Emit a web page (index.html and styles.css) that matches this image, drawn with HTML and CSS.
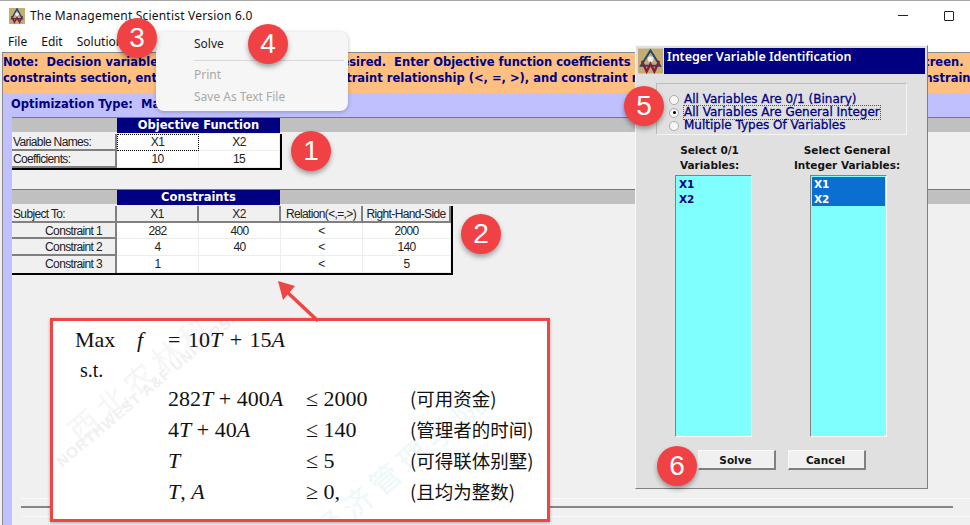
FILE: index.html
```html
<!DOCTYPE html>
<html lang="en">
<head>
  <meta charset="UTF-8" />
  <title>The Management Scientist Version 6.0</title>
  <link rel="stylesheet" href="styles.css">
</head>
<body>

<header class="titlebar">
  <svg class="app-icon" viewBox="0 0 18 18"><rect width="18" height="18" fill="#c4ad72"/><path d="M9 1 L15 12 L3 12 Z" fill="none" stroke="#1c4a78" stroke-width="1.6"/><circle cx="9" cy="7" r="2" fill="#eee"/><path d="M3 9 L6 16 L9 11 L12 16 L15 9" fill="none" stroke="#8c1c3c" stroke-width="1.8"/></svg>
  <span class="app-title">The Management Scientist Version 6.0</span>
  <span class="win-min"></span>
  <span class="win-max"></span>
</header>

<nav class="menubar">
  <span>File</span>
  <span>Edit</span>
  <span>Solution</span>
</nav>

<main class="client">
  <div class="note">
    <div>Note:&nbsp; Decision variable names can be changed as desired.&nbsp; Enter Objective function coefficients in the objectives section at the top of your screen.</div>
    <div>constraints section, enter the coefficients, then constraint relationship (&lt;, =, &gt;), and constraint right-hand-side values for each row of the constraints</div>
  </div>
  <div class="opt-type">Optimization Type:&nbsp; Maximize</div>

  <div class="sheet">
    <section class="block block-obj">
      <div class="band"><span class="band-title">Objective Function</span></div>
      <div class="grid grid-obj">
        <div class="cell label">Variable Names:</div>
        <div class="cell head focus">X1</div>
        <div class="cell head">X2</div>
        <div class="cell label">Coefficients:</div>
        <div class="cell">10</div>
        <div class="cell">15</div>
      </div>
    </section>

    <section class="block block-con">
      <div class="band"><span class="band-title">Constraints</span></div>
      <div class="grid grid-con">
        <div class="cell label">Subject To:</div>
        <div class="cell head">X1</div>
        <div class="cell head">X2</div>
        <div class="cell head">Relation(&lt;,=,&gt;)</div>
        <div class="cell head">Right-Hand-Side</div>

        <div class="cell label right">Constraint 1</div>
        <div class="cell">282</div>
        <div class="cell">400</div>
        <div class="cell">&lt;</div>
        <div class="cell">2000</div>

        <div class="cell label right">Constraint 2</div>
        <div class="cell">4</div>
        <div class="cell">40</div>
        <div class="cell">&lt;</div>
        <div class="cell">140</div>

        <div class="cell label right">Constraint 3</div>
        <div class="cell">1</div>
        <div class="cell"></div>
        <div class="cell">&lt;</div>
        <div class="cell">5</div>
      </div>
    </section>

    <div class="scroll-track"><div class="scroll-line"></div></div>
  </div>
</main>

<!-- popup from the Solution menu -->
<div class="popup">
  <div class="popup-item">Solve</div>
  <div class="popup-sep"></div>
  <div class="popup-item off">Print</div>
  <div class="popup-item off">Save As Text File</div>
</div>

<!-- pasted model formulation -->
<div class="model">
  <span class="mark mark-gray">西北农林科技大学</span>
  <span class="mark mark-en">NORTHWEST A&amp;F UNIVERSITY</span>
  <span class="mark mark-blue">经济管理学院</span>
  <div class="model-grid">
    <div>Max</div><div class="f"><i>f</i></div><div class="wide eq">= 10<i>T</i> + 15<i>A</i></div>
    <div class="st">s.t.</div><div></div><div class="wide"></div>
    <div></div><div></div><div>282<i>T</i> + 400<i>A</i></div><div>≤ 2000</div><div class="cn">(可用资金)</div>
    <div></div><div></div><div>4<i>T</i> + 40<i>A</i></div><div>≤ 140</div><div class="cn">(管理者的时间)</div>
    <div></div><div></div><div><i>T</i></div><div>≤ 5</div><div class="cn">(可得联体别墅)</div>
    <div></div><div></div><div><i>T</i>, <i>A</i></div><div>≥ 0,</div><div class="cn">(且均为整数)</div>
  </div>
</div>

<svg class="arrow" viewBox="0 0 50 50" width="50" height="50"><path d="M43 42 L10 11" stroke="#f04545" stroke-width="3.5" fill="none"/><path d="M3 2 L20 7 L8 21 Z" fill="#f04545"/></svg>

<!-- dialog -->
<div class="dialog">
  <div class="dlg-head">
    <svg class="dlg-icon" viewBox="0 0 26 26"><rect width="26" height="26" fill="#c4ad72"/><path d="M13 2 L23 18 L3 18 Z" fill="none" stroke="#1c4a78" stroke-width="2"/><circle cx="13" cy="11" r="3" fill="#eee"/><path d="M4 13 L9 24 L13 16 L17 24 L22 13" fill="none" stroke="#8c1c3c" stroke-width="2.4"/></svg>
    <div class="dlg-title">Integer Variable Identification</div>
  </div>
  <div class="radios">
    <div class="radio"><span class="dot"></span>All Variables Are 0/1 (Binary)</div>
    <div class="radio"><span class="dot on"></span><span class="dotted">All Variables Are General Integer</span></div>
    <div class="radio"><span class="dot"></span>Multiple Types Of Variables</div>
  </div>
  <div class="lists">
    <div class="list-col">
      <div class="list-title title-left">Select 0/1<br>Variables:</div>
      <div class="list">
        <div class="opt">X1</div>
        <div class="opt">X2</div>
      </div>
    </div>
    <div class="list-col">
      <div class="list-title title-right">Select General<br>Integer Variables:</div>
      <div class="list">
        <div class="opt sel">X1</div>
        <div class="opt sel">X2</div>
      </div>
    </div>
  </div>
  <div class="dlg-buttons">
    <button class="btn">Solve</button>
    <button class="btn">Cancel</button>
  </div>
</div>

<span class="badge b1">1</span>
<span class="badge b2">2</span>
<span class="badge b3">3</span>
<span class="badge b4">4</span>
<span class="badge b5">5</span>
<span class="badge b6">6</span>

</body>
</html>
```

FILE: styles.css
```css
html, body {
  margin: 0;
  height: 525px;
  overflow: hidden;
}
body {
  position: relative;
  width: 970px;
  background: #f0f0f0;
  font-family: 'Liberation Sans', sans-serif;
  color: #000;
}

/* window chrome */
.titlebar {
  height: 30px;
  box-sizing: border-box;
  padding-left: 9px;
  display: flex;
  align-items: center;
  background: #fff;
  border-top: 1px solid #a8a8a8;
}
.app-icon {
  width: 16px;
  height: 16px;
}
.app-title {
  margin-left: 5px;
  font-family: 'Noto Sans', sans-serif;
  font-size: 12px;
  letter-spacing: .2px;
  color: #111;
}
.win-min {
  margin-left: auto;
  width: 10px;
  height: 1px;
  background: #222;
}
.win-max {
  margin-left: 36px;
  margin-right: 16px;
  width: 8px;
  height: 8px;
  border: 1px solid #222;
  border-radius: 1px;
}
.menubar {
  height: 22px;
  padding-left: 8px;
  display: flex;
  gap: 14px;
  align-items: center;
  background: #fff;
  font-family: 'Noto Sans', sans-serif;
  font-size: 12px;
  color: #111;
}

/* client area */
.client {
  margin-left: 2px;
  border-left: 1px solid #8a8a8a;
  border-top: 1px solid #8a8a8a;
}
.note {
  height: 40px;
  box-sizing: border-box;
  padding-top: 1px;
  background: #ffbf80;
  font-family: 'DejaVu Sans', sans-serif;
  font-size: 11.5px;
  font-weight: bold;
  line-height: 16px;
  color: #000080;
  white-space: nowrap;
  overflow: hidden;
}
.opt-type {
  height: 24px;
  box-sizing: border-box;
  padding: 4px 0 0 8px;
  background: #c0c0ff;
  font-family: 'DejaVu Sans', sans-serif;
  font-size: 11.5px;
  font-weight: bold;
  line-height: 14px;
  color: #000080;
}
.sheet {
  height: 408px;
  position: relative;
  border-left: 9px solid #c0c0ff;
  background: #f0f0f0;
}
.block-obj {
  height: 72px;
}
.band {
  height: 15px;
  padding-left: 105px;
  background: #c0c0c0;
  border-top: 1px solid #777;
  box-sizing: border-box;
}
.band-title {
  display: block;
  width: 163px;
  height: 15px;
  background: #000080;
  color: #fff;
  font-family: 'DejaVu Sans', sans-serif;
  font-size: 11.5px;
  font-weight: bold;
  line-height: 15px;
  text-align: center;
}

/* spreadsheet style grids */
.grid {
  display: inline-grid;
  border-right: 2px solid #000;
  border-bottom: 2px solid #000;
  font-size: 12px;
  letter-spacing: -.65px;
  color: #222;
}
.grid-obj {
  grid-template-columns: 105px 82px 81px;
  grid-auto-rows: 17px;
}
.grid-con {
  grid-template-columns: 105px 82px 82px 82px 88px;
  grid-auto-rows: 16.7px;
}
.cell {
  box-sizing: border-box;
  background: #fff;
  border-right: 1px solid #ececec;
  border-bottom: 1px solid #ececec;
  text-align: center;
  line-height: 16px;
  white-space: nowrap;
}
.label {
  padding-left: 1px;
  background: #f0f0f0;
  border-right: 2px solid #808080;
  border-bottom: 2px solid #808080;
  text-align: left;
}
.right {
  padding-right: 13px;
  text-align: right;
}
.head {
  background: #f0f0f0;
  border-right: 2px solid #808080;
  border-bottom: 2px solid #808080;
}
.grid-obj .head {
  background: #fff;
  border-right: 1px solid #ececec;
  border-bottom: 1px solid #ececec;
}
.grid-obj .focus {
  outline: 1px dotted #000;
  outline-offset: -1px;
}
.block-con .label:nth-last-child(5) {
  border-bottom: 0;
}
.scroll-track {
  position: absolute;
  left: 9px;
  right: 0;
  top: 381px;
  height: 17px;
  border-top: 1px solid #fafafa;
  border-bottom: 1px solid #fafafa;
}
.scroll-line {
  margin-top: 7px;
  width: 932px;
  height: 2px;
  background: #858585;
}

/* popup menu */
.popup {
  position: absolute;
  left: 156px;
  top: 32px;
  width: 192px;
  height: 79px;
  box-sizing: border-box;
  padding-top: 3px;
  background: #f6f6f6;
  border-radius: 8px;
  box-shadow: 0 1px 4px rgba(0, 0, 0, .25);
  font-family: 'Noto Sans', sans-serif;
  font-size: 12px;
  color: #222;
}
.popup-item {
  height: 17px;
  padding-left: 38px;
  line-height: 17px;
}
.popup-item.off {
  height: 22px;
  line-height: 22px;
  color: #a9a9a9;
}
.popup-sep {
  height: 1px;
  margin: 8px 4px 3px 38px;
  background: #d8d8d8;
}

/* formulation card */
.model {
  position: absolute;
  left: 50px;
  top: 318px;
  width: 494px;
  height: 198px;
  border: 3px solid #f04545;
  background: #fff;
  overflow: hidden;
  box-shadow: 0 1px 3px rgba(0, 0, 0, .3);
  font-family: 'Liberation Serif', 'Noto Sans CJK SC', serif;
  font-size: 22px;
  color: #111;
}
.model-grid {
  position: relative;
  display: grid;
  grid-template-columns: 62px 31px 138px 104px auto;
  grid-template-rows: 31px 28px 31px 31px 31px 31px;
  padding: 3px 0 0 22px;
  line-height: 31px;
  white-space: nowrap;
}
.model-grid .wide {
  grid-column: 3 / 6;
}
.model-grid .eq {
  word-spacing: 2px;
}
.st {
  padding-left: 5px;
  font-size: 20px;
}
.cn {
  font-family: 'Noto Sans CJK SC', serif;
  font-size: 18.5px;
}
.mark {
  position: absolute;
  white-space: nowrap;
  transform: rotate(-40deg);
  transform-origin: left top;
}
.mark-gray {
  left: 4px;
  top: 96px;
  font-size: 30px;
  letter-spacing: 6px;
  color: #f6f6f6;
}
.mark-en {
  left: 0;
  top: 136px;
  font-family: 'Liberation Sans', sans-serif;
  font-size: 15px;
  font-weight: bold;
  letter-spacing: 1px;
  color: #f0f0f0;
}
.mark-blue {
  left: 250px;
  top: 196px;
  font-size: 30px;
  letter-spacing: 6px;
  color: #eef8f9;
}

.arrow {
  position: absolute;
  left: 275px;
  top: 279px;
}

/* dialog */
.dialog {
  position: absolute;
  left: 635px;
  top: 45px;
  width: 293px;
  height: 444px;
  box-sizing: border-box;
  padding: 2px;
  background: #e0e0e0;
  border: 1px solid #f8f8f8;
  border-right: 1px solid #808080;
  border-bottom: 1px solid #808080;
  font-family: 'DejaVu Sans', sans-serif;
  font-size: 10.5px;
  font-weight: bold;
}
.dlg-head {
  height: 26px;
  display: flex;
}
.dlg-icon {
  width: 25px;
  height: 26px;
}
.dlg-title {
  flex: 1;
  margin-left: 1px;
  padding-left: 3px;
  background: #000080;
  color: #fff;
  font-family: 'Noto Sans', sans-serif;
  font-size: 12.5px;
  font-weight: 600;
  line-height: 17px;
}
.radios {
  margin: 9px 18px 0 18px;
  height: 52px;
  box-sizing: border-box;
  padding: 9px 0 0 12px;
  border: 1px solid #bcbcbc;
  border-right-color: #f4f4f4;
  border-bottom-color: #f4f4f4;
  color: #000080;
  line-height: 13px;
  font-size: 12px;
  font-weight: normal;
  -webkit-text-stroke: .3px #000080;
}
.radio {
  display: flex;
  align-items: center;
  white-space: nowrap;
}
.dot {
  position: relative;
  width: 10px;
  height: 10px;
  margin-right: 5px;
  background: #f8f8f8;
  border-radius: 50%;
  border: 1px solid #aaa;
  box-sizing: border-box;
}
.dot.on::after {
  content: "";
  position: absolute;
  left: 2.5px;
  top: 2.5px;
  width: 3px;
  height: 3px;
  border-radius: 50%;
  background: #000;
}
.dotted {
  outline: 1px dotted #555;
}
.lists {
  margin-top: 8px;
  padding-left: 37px;
  display: flex;
  gap: 58px;
}
.list-col {
  width: 77px;
  display: flex;
  flex-direction: column;
  align-items: center;
}
.list-title {
  height: 31px;
  white-space: nowrap;
  text-align: center;
  line-height: 14.5px;
  color: #141414;
}
.title-left {
  margin-right: 8px;
}
.title-right {
  margin-right: 3px;
}
.list {
  width: 77px;
  height: 262px;
  box-sizing: border-box;
  margin-top: 1px;
  padding: 1px;
  background: #80ffff;
  border: 1px solid #fff;
  border-top-color: #808080;
  border-left-color: #808080;
  color: #000080;
  font-size: 10.5px;
  line-height: 14.5px;
}
.opt {
  padding-left: 2px;
}
.opt.sel {
  background: #0a6fd0;
  color: #fff;
}
.dlg-buttons {
  margin-top: 13px;
  padding-left: 60px;
  display: flex;
  gap: 12px;
}
.btn {
  width: 78px;
  height: 20px;
  padding: 0 2px 0 0;
  background: #f0f0f0;
  border: 1px solid #f8f8f8;
  border-right: 2px solid #808080;
  border-bottom: 2px solid #808080;
  font-family: 'DejaVu Sans', sans-serif;
  font-size: 10.5px;
  font-weight: bold;
  color: #141414;
}

/* numbered callouts */
.badge {
  position: absolute;
  width: 40px;
  height: 40px;
  border-radius: 50%;
  background: #f04245;
  box-shadow: 0 3px 5px rgba(0, 0, 0, .35);
  color: #fff;
  font-family: 'Liberation Sans', sans-serif;
  font-size: 28px;
  line-height: 40px;
  text-align: center;
}
.b1 { left: 291px; top: 131px; }
.b2 { left: 461px; top: 214px; }
.b3 { left: 117px; top: 18px; }
.b4 { left: 248px; top: 24px; }
.b5 { left: 624px; top: 86px; }
.b6 { left: 657px; top: 446px; }
```
